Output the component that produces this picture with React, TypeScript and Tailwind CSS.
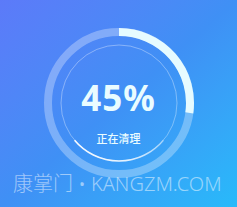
export default function App() {
  return (
    <div className="relative w-[237px] h-[207px] overflow-hidden bg-gradient-to-br from-[#5c7af9] via-[#3f90f5] to-[#27bafa] font-['Noto_Sans','Noto_Sans_CJK_SC',sans-serif]">
      <div className="flex flex-col items-center pt-[27px]">
        {/* progress ring */}
        <div className="relative w-[152px] h-[152px]">
          <svg width="152" height="152" viewBox="0 0 152 152" className="block">
            <defs>
              <linearGradient id="scan" gradientUnits="userSpaceOnUse" x1="30" y1="0" x2="122" y2="0">
                <stop offset="0" stopColor="#ffffff" stopOpacity="0.95" />
                <stop offset="0.6" stopColor="#ffffff" stopOpacity="0.8" />
                <stop offset="1" stopColor="#ffffff" stopOpacity="0.35" />
              </linearGradient>
            </defs>
            <circle cx="76" cy="76" r="71" fill="none" stroke="#ffffff" strokeOpacity="0.3" strokeWidth="8" />
            <path d="M 76 5 A 71 71 0 0 1 146.31 85.88" fill="none" stroke="#e6fbff" strokeWidth="8" />
            <circle cx="76" cy="76" r="58" fill="none" stroke="#ffffff" strokeOpacity="0.35" strokeWidth="1" />
            <path d="M 120.43 113.28 A 58 58 0 0 1 31.57 113.28" fill="none" stroke="url(#scan)" strokeWidth="1.6" />
          </svg>
          <div className="absolute inset-0 flex flex-col items-center pt-[53px] text-[#eafcff]">
            <div className="text-[35px] leading-none font-bold tracking-[1px]">45%</div>
            <div className="mt-[18px] text-[11px] leading-none font-medium font-['Noto_Sans_CJK_SC',sans-serif]">正在清理</div>
          </div>
        </div>
      </div>
      {/* watermark */}
      <div className="absolute left-[13px] top-[172px] text-[20px] leading-[24px] font-light text-white/50 whitespace-nowrap">
        康掌门 • KANGZM.COM
      </div>
    </div>
  );
}
